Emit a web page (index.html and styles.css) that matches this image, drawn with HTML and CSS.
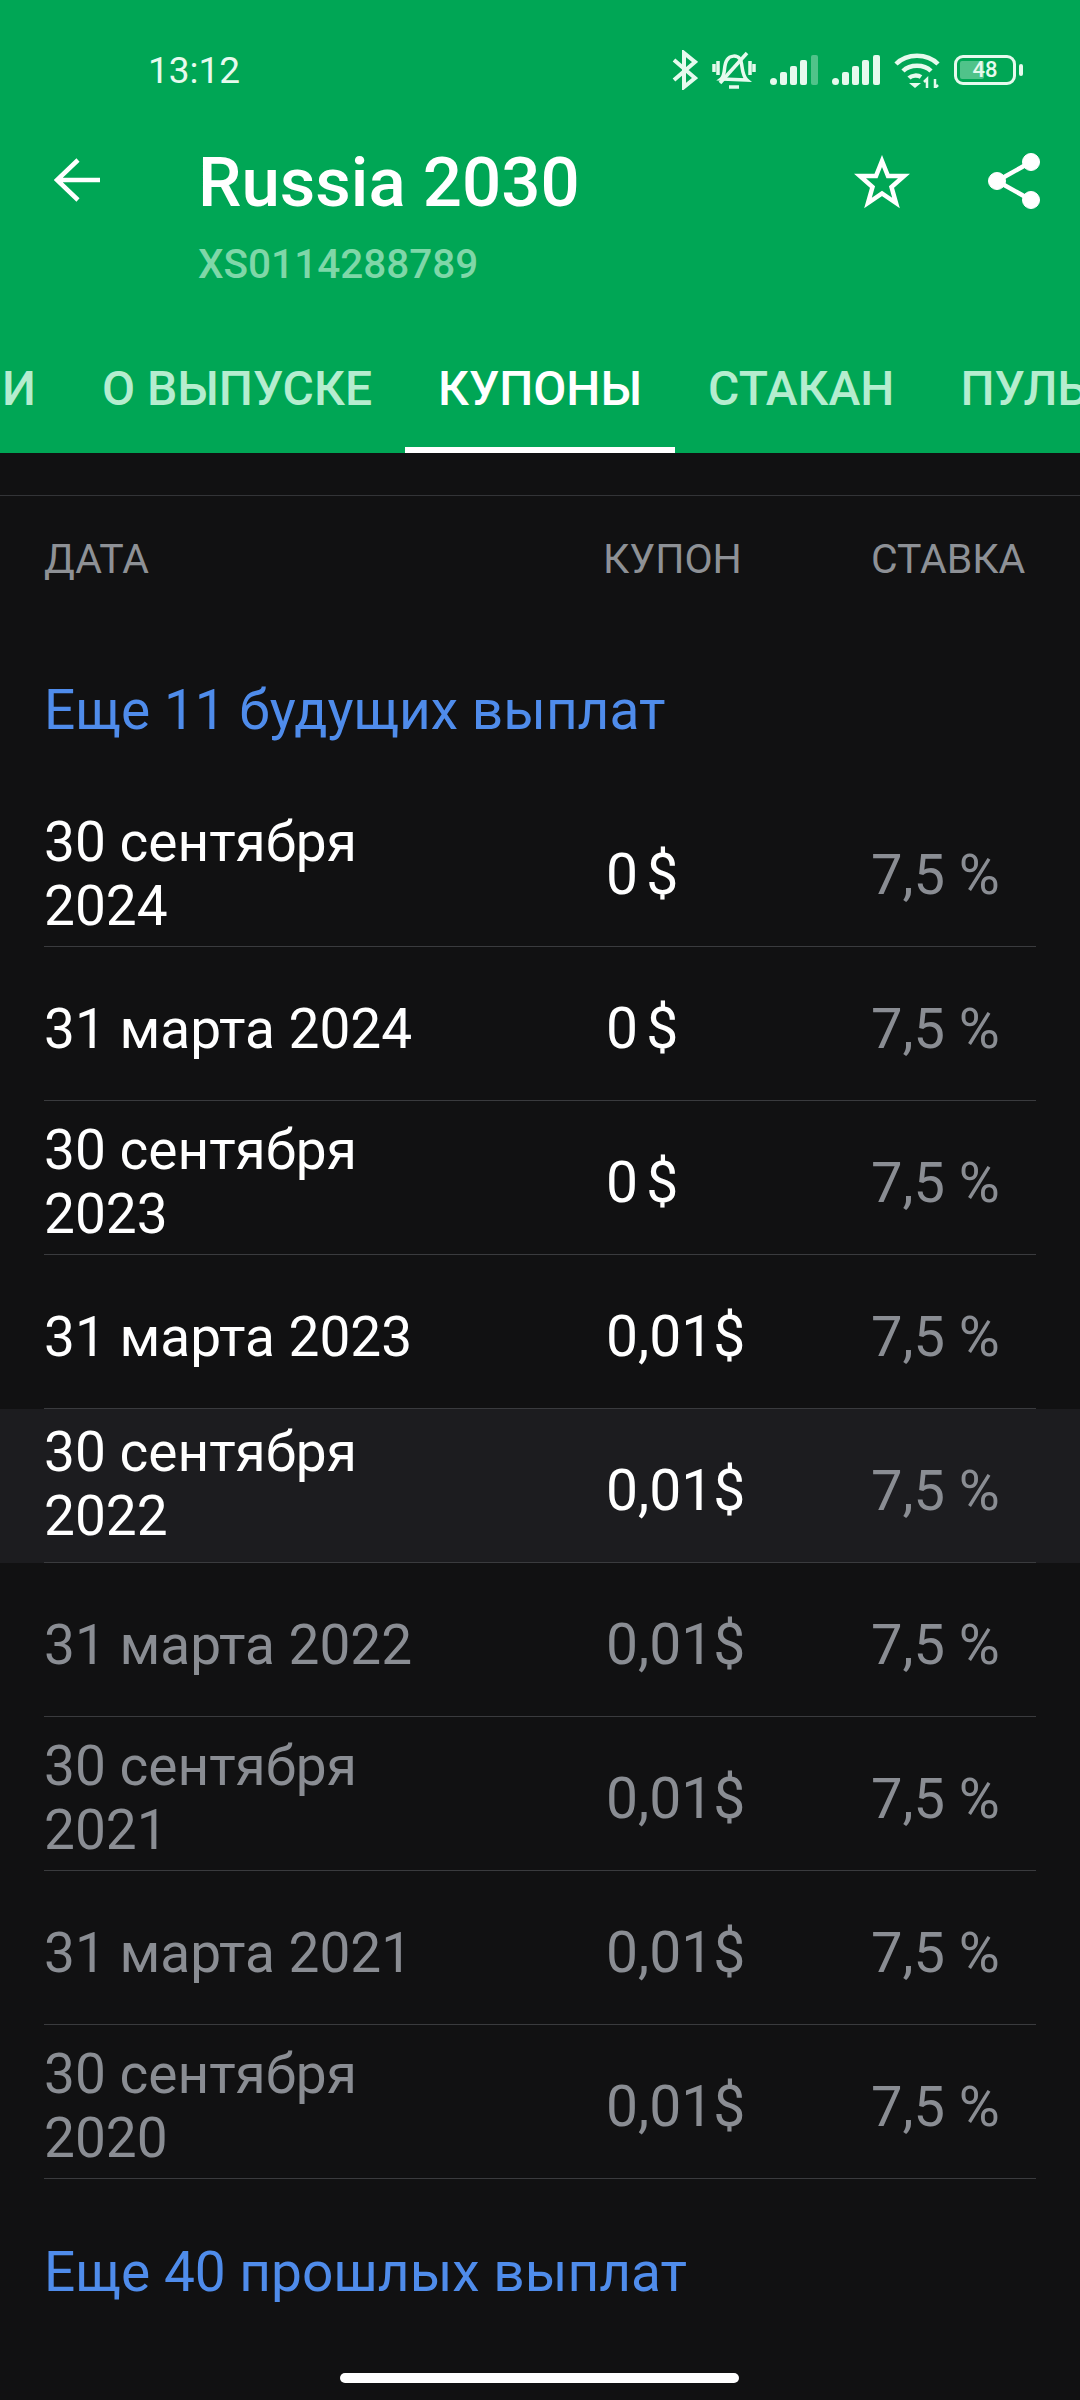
FILE: index.html
```html
<!DOCTYPE html>
<html lang="ru">
<head>
  <meta charset="UTF-8" />
  <title>Russia 2030</title>
  <meta name="viewport" content="width=device-width, initial-scale=1.0" />
  <link rel="stylesheet" href="styles.css">
</head>
<body>
  <div class="header">
    <div class="status">
      <span class="time">13:12</span>
      <div class="status-icons">
        <svg width="26" height="40" viewBox="0 0 26 40" fill="none" stroke="#e6faee" stroke-width="4"><path d="M2 10 L23 28 L12 37 V3 L23 12 L2 30"/></svg>
        <svg width="44" height="38" viewBox="0 0 44 38" fill="none" stroke="#e6faee" stroke-width="3.5"><path d="M9 28 C14 24 11 15 15 9 C18 4 25 4 28 8 C31 13 29 24 35 29 Z"/><path d="M8 32 L35 2"/><path d="M2 13 V21 M6 10 V24 M38 10 V24 M42 13 V21"/><path d="M17 36 H27"/></svg>
        <svg width="48" height="30" viewBox="0 0 48 30" fill="#e6faee"><rect x="0" y="23" width="7" height="7" rx="3.5"/><rect x="10" y="17" width="7" height="13" rx="2"/><rect x="20" y="11" width="7" height="19" rx="2"/><rect x="30" y="5" width="7" height="25" rx="2"/><rect x="41" y="0" width="7" height="30" rx="2" opacity="0.35"/></svg>
        <svg width="48" height="30" viewBox="0 0 48 30" fill="#e6faee"><rect x="0" y="23" width="7" height="7" rx="3.5"/><rect x="10" y="17" width="7" height="13" rx="2"/><rect x="20" y="11" width="7" height="19" rx="2"/><rect x="30" y="5" width="7" height="25" rx="2"/><rect x="41" y="0" width="7" height="30" rx="2"/></svg>
        <svg width="46" height="36" viewBox="0 0 46 36" fill="none" stroke="#e6faee" stroke-width="4.5"><path d="M2 12 C13 1 33 1 44 12"/><path d="M9 19 C16 12 30 12 37 19"/><path d="M15 26 C18 23 24 23 27 25"/><path d="M15 31 L21 36 L27 31 Z" fill="#e6faee" stroke="none"/><path d="M33 36 V27 L30 30 M41 27 V36 L44 33" stroke-width="2.5"/></svg>
        <div class="battery">
          <div class="battery-body"><div class="battery-fill"></div><span class="battery-num">48</span></div>
          <div class="battery-cap"></div>
        </div>
      </div>
    </div>

    <div class="appbar">
      <svg class="back" width="48" height="44" viewBox="0 0 48 44" fill="none" stroke="#fff" stroke-width="4.5"><path d="M2 22 H46 M24 2 L3 22 L24 42"/></svg>
      <div class="titles">
        <div class="title">Russia 2030</div>
        <div class="subtitle">XS0114288789</div>
      </div>
      <svg class="star" width="56" height="54" viewBox="0 0 56 54" fill="none" stroke="#fff" stroke-width="4.5"><path d="M28 6 L34 21 L50 21 L37.500 32 L42 48 L28 38.500 L14 48 L18.500 32 L6 21 L22 21 Z"/></svg>
      <svg class="share" width="52" height="56" viewBox="0 0 52 56" fill="#fff" stroke="#fff"><circle cx="9" cy="28" r="8.5"/><circle cx="43" cy="9" r="8.5"/><circle cx="43" cy="47" r="8.5"/><path d="M9 28 L43 9 M9 28 L43 47" stroke-width="4.5" fill="none"/></svg>
    </div>

    <div class="tabs">
      <div class="tab">И</div>
      <div class="tab">О ВЫПУСКЕ</div>
      <div class="tab active">КУПОНЫ</div>
      <div class="tab">СТАКАН</div>
      <div class="tab">ПУЛЬС</div>
    </div>
  </div>

  <div class="table">
    <div class="table-head">
      <span class="col-date">ДАТА</span>
      <span class="col-coupon">КУПОН</span>
      <span class="col-rate">СТАВКА</span>
    </div>

    <div class="more more-top">Еще 11 будущих выплат</div>

    <div class="row"><div class="row-in"><span class="col-date wrap">30 сентября<br>2024</span><span class="col-coupon">0 $</span><span class="col-rate">7,5 %</span></div></div>
    <div class="row"><div class="row-in"><span class="col-date">31 марта 2024</span><span class="col-coupon">0 $</span><span class="col-rate">7,5 %</span></div></div>
    <div class="row"><div class="row-in"><span class="col-date wrap">30 сентября<br>2023</span><span class="col-coupon">0 $</span><span class="col-rate">7,5 %</span></div></div>
    <div class="row"><div class="row-in"><span class="col-date">31 марта 2023</span><span class="col-coupon">0,01$</span><span class="col-rate">7,5 %</span></div></div>
    <div class="row current"><div class="row-in"><span class="col-date wrap">30 сентября<br>2022</span><span class="col-coupon">0,01$</span><span class="col-rate">7,5 %</span></div></div>
    <div class="row past"><div class="row-in"><span class="col-date">31 марта 2022</span><span class="col-coupon">0,01$</span><span class="col-rate">7,5 %</span></div></div>
    <div class="row past"><div class="row-in"><span class="col-date wrap">30 сентября<br>2021</span><span class="col-coupon">0,01$</span><span class="col-rate">7,5 %</span></div></div>
    <div class="row past"><div class="row-in"><span class="col-date">31 марта 2021</span><span class="col-coupon">0,01$</span><span class="col-rate">7,5 %</span></div></div>
    <div class="row past"><div class="row-in"><span class="col-date wrap">30 сентября<br>2020</span><span class="col-coupon">0,01$</span><span class="col-rate">7,5 %</span></div></div>

    <div class="more more-bottom">Еще 40 прошлых выплат</div>
  </div>

  <div class="home-bar"></div>
</body>
</html>
```

FILE: styles.css
```css
body {
  margin: 0;
  width: 1080px;
  height: 2400px;
  overflow: hidden;
  position: relative;
  font-family: Roboto, sans-serif;
  background-color: #111112;
  color: #fff;
}

.header {
  background-color: #00a655;
  height: 453px;
  display: flex;
  flex-direction: column;
  overflow: hidden;
}

.status {
  height: 96px;
  padding: 50px 0 0 148px;
  box-sizing: border-box;
  display: flex;
  align-items: flex-start;
  justify-content: space-between;
}

.time {
  font-size: 37px;
  line-height: 40px;
  margin-top: 1px;
  color: #e6faee;
}

.status-icons {
  display: flex;
  align-items: center;
  gap: 14px;
  margin-right: 57px;
}

.battery {
  display: flex;
  align-items: center;
  gap: 3px;
}

.battery-body {
  width: 62px;
  height: 30px;
  box-sizing: border-box;
  border: 3px solid #e6faee;
  border-radius: 9px;
  position: relative;
  display: flex;
  align-items: center;
  justify-content: center;
}

.battery-fill {
  position: absolute;
  left: 3px;
  top: 3px;
  bottom: 3px;
  width: 24px;
  background: rgba(230, 250, 238, 0.35);
  border-radius: 2px;
}

.battery-num {
  position: relative;
  font-size: 22px;
  line-height: 24px;
  font-weight: 500;
  color: #e6faee;
}

.battery-cap {
  width: 4px;
  height: 12px;
  background: #e6faee;
  border-radius: 2px;
}

.appbar {
  display: flex;
  align-items: flex-start;
  height: 198px;
}

.back {
  margin: 62px 0 0 54px;
  flex: none;
}

.titles {
  margin-left: 96px;
  flex: 1;
}

.title {
  font-size: 69px;
  line-height: 76px;
  font-weight: 500;
  margin-top: 49px;
}

.subtitle {
  font-size: 40.5px;
  line-height: 46px;
  font-weight: 500;
  margin-top: 20px;
  color: #7fd7a8;
}

.star {
  margin: 59px 78px 0 0;
  flex: none;
}

.share {
  margin: 57px 40px 0 0;
  flex: none;
}

.tabs {
  display: flex;
  flex: 1;
  margin-left: -31px;
}

.tab {
  flex: none;
  padding: 70px 33px 0;
  font-size: 48px;
  font-weight: 500;
  line-height: 50px;
  color: #b5edcf;
  border-bottom: 6px solid transparent;
  box-sizing: border-box;
}

.tab.active {
  color: #fff;
  border-bottom-color: #fff;
}

.table-head {
  margin-top: 42px;
  border-top: 1px solid #333437;
  display: flex;
  align-items: center;
  height: 127px;
  box-sizing: border-box;
  padding: 0 44px;
  font-size: 41px;
  color: #8e9196;
}

.table-head .col-date {
  width: 559px;
  flex: none;
}

.table-head .col-coupon {
  width: 268px;
  flex: none;
}

.more {
  padding: 0 44px;
  font-size: 55px;
  line-height: 66px;
  color: #4f8ceb;
}

.more-top {
  margin-top: 55px;
  margin-bottom: 50px;
}

.more-bottom {
  margin-top: 60px;
}

.row {
  padding: 0 44px;
}

.row-in {
  height: 154px;
  box-sizing: border-box;
  padding-top: 11px;
  border-bottom: 1px solid #3a3b3e;
  display: flex;
  align-items: center;
  font-size: 56px;
  line-height: 64px;
}

.row .col-date {
  width: 562px;
  flex: none;
  font-size: 55px;
}

.row .col-date.wrap {
  margin-top: -3px;
}

.row.current .col-date.wrap {
  margin-top: -15px;
}

.row .col-coupon {
  width: 265px;
  flex: none;
  font-size: 57px;
  word-spacing: -6px;
}

.row .col-rate {
  color: #8a8d93;
}

.row.current {
  background-color: #1c1c1f;
}

.row.past .col-date,
.row.past .col-coupon {
  color: #8a8d93;
}

.home-bar {
  position: absolute;
  left: 340px;
  bottom: 17px;
  width: 399px;
  height: 10px;
  border-radius: 5px;
  background: #fff;
}
```
